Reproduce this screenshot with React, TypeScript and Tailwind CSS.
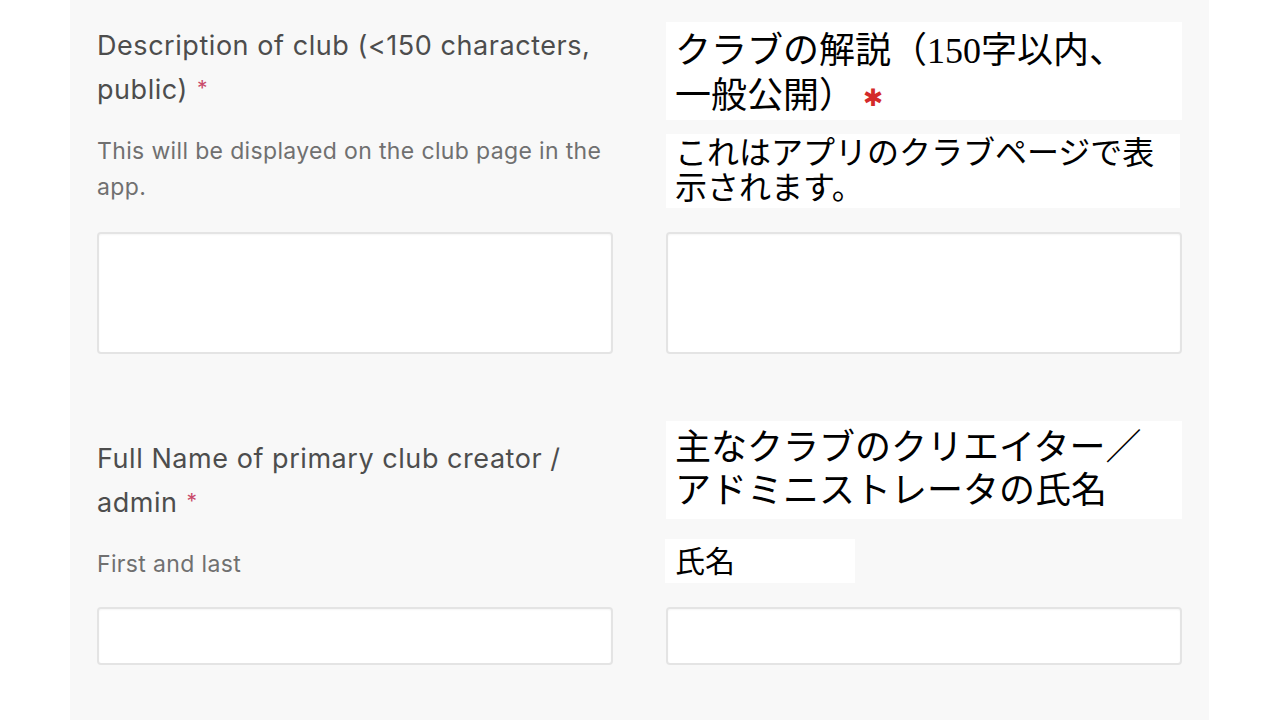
const sans = "font-['Inter','Liberation_Sans',sans-serif]";
const jp = "font-['Liberation_Serif','Noto_Sans_CJK_JP',serif]";

function Field({ className }: { className: string }) {
  return (
    <div
      className={`w-[516px] rounded-[4px] border-2 border-[#e4e4e4] bg-white shadow-[inset_0_1px_2px_rgba(0,0,0,0.04)] ${className}`}
    />
  );
}

function Req() {
  return <span className="relative top-[-3px] ml-[9px] text-[21px] leading-none text-[#c94a6a]">*</span>;
}

function JpReq() {
  return (
    <span className="relative top-[-2px] ml-[8px] font-['DejaVu_Sans',sans-serif] text-[24px] leading-none text-[#d42a2a]">
      ✱
    </span>
  );
}

export default function App() {
  return (
    <div className="h-[720px] w-full overflow-hidden bg-white">
      <div className="ml-[70px] h-full w-[1139px] bg-[#f8f8f8] pl-[27px] pt-[22px]">
        {/* description */}
        <div className="grid grid-cols-[516px_516px] items-start gap-x-[53px]">
          <div className={`${sans} mt-[2px] text-[27px] leading-[44px] tracking-[0.55px] text-[#4d4d4d]`}>
            Description of club (&lt;150 characters, public)
            <Req />
          </div>
          <div className={`${jp} h-[98px] bg-white pl-[9px] pt-[7px] text-[36px] leading-[45px] text-black`}>
            <span className="block">クラブの解説（150字以内、</span>
            <span className="block">
              一般公開）<JpReq />
            </span>
          </div>
        </div>

        <div className="mt-[14px] grid grid-cols-[516px_516px] items-start gap-x-[53px]">
          <div className={`${sans} mt-[-1px] text-[23px] leading-[36px] tracking-[0.35px] text-[#707070]`}>
            This will be displayed on the club page in the app.
          </div>
          <div className={`${jp} h-[74px] w-[514px] bg-white pl-[9px] pt-[2px] text-[32px] leading-[35px] text-black`}>
            <span className="block">これはアプリのクラブページで表</span>
            <span className="block">示されます。</span>
          </div>
        </div>

        <div className="mt-[24px] grid grid-cols-[516px_516px] gap-x-[53px]">
          <Field className="h-[122px]" />
          <Field className="h-[122px]" />
        </div>

        {/* creator */}
        <div className="mt-[67px] grid grid-cols-[516px_516px] items-start gap-x-[53px]">
          <div className={`${sans} mt-[16px] text-[27px] leading-[44px] tracking-[0.55px] text-[#4d4d4d]`}>
            Full Name of primary club creator / admin
            <Req />
          </div>
          <div className={`${jp} h-[98px] bg-white pl-[9px] pt-[6px] text-[36px] leading-[43px] text-black`}>
            <span className="block">主なクラブのクリエイター／</span>
            <span className="block">アドミニストレータの氏名</span>
          </div>
        </div>

        <div className="mt-[14px] grid grid-cols-[516px_516px] items-start gap-x-[53px]">
          <div className={`${sans} mt-[3px] text-[23px] leading-[44px] tracking-[0.35px] text-[#707070]`}>
            First and last
          </div>
          <div className={`${jp} -ml-[1px] h-[44px] w-[190px] bg-white pl-[10px] text-[30px] leading-[46px] text-black`}>
            氏名
          </div>
        </div>

        <div className="mt-[21px] grid grid-cols-[516px_516px] gap-x-[53px]">
          <Field className="h-[58px]" />
          <Field className="h-[58px]" />
        </div>
      </div>
    </div>
  );
}
